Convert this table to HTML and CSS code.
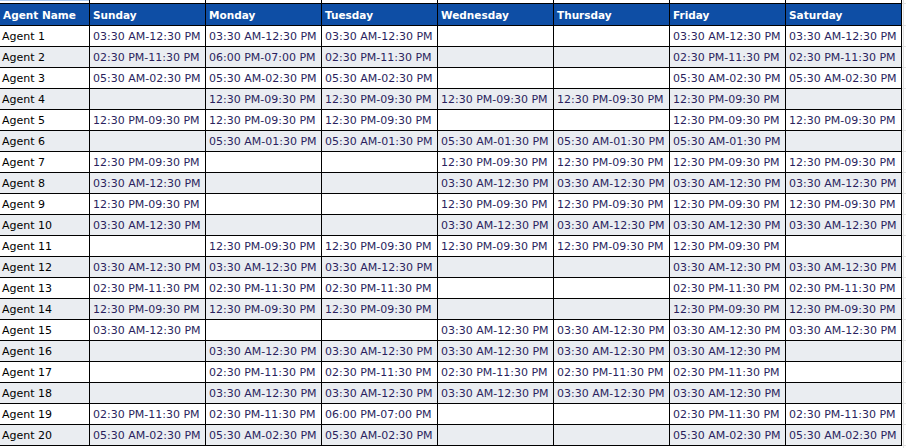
FILE: index.html
```html
<!DOCTYPE html>
<html>
<head>
<meta charset="utf-8">
<link rel="stylesheet" href="styles.css">
</head>
<body>
<div class="sheet">
  <div class="grid">
    <div class="strip first"></div><div class="strip"></div><div class="strip"></div><div class="strip"></div><div class="strip"></div><div class="strip"></div><div class="strip"></div><div class="strip"></div>
    <div class="hd">Agent Name</div><div class="hd">Sunday</div><div class="hd">Monday</div><div class="hd">Tuesday</div><div class="hd">Wednesday</div><div class="hd">Thursday</div><div class="hd">Friday</div><div class="hd">Saturday</div>

    <div class="name">Agent 1</div><div class="cell">03:30 AM-12:30 PM</div><div class="cell">03:30 AM-12:30 PM</div><div class="cell">03:30 AM-12:30 PM</div><div class="cell"></div><div class="cell"></div><div class="cell">03:30 AM-12:30 PM</div><div class="cell">03:30 AM-12:30 PM</div>
    <div class="name alt">Agent 2</div><div class="cell alt">02:30 PM-11:30 PM</div><div class="cell alt">06:00 PM-07:00 PM</div><div class="cell alt">02:30 PM-11:30 PM</div><div class="cell alt"></div><div class="cell alt"></div><div class="cell alt">02:30 PM-11:30 PM</div><div class="cell alt">02:30 PM-11:30 PM</div>
    <div class="name">Agent 3</div><div class="cell">05:30 AM-02:30 PM</div><div class="cell">05:30 AM-02:30 PM</div><div class="cell">05:30 AM-02:30 PM</div><div class="cell"></div><div class="cell"></div><div class="cell">05:30 AM-02:30 PM</div><div class="cell">05:30 AM-02:30 PM</div>
    <div class="name alt">Agent 4</div><div class="cell alt"></div><div class="cell alt">12:30 PM-09:30 PM</div><div class="cell alt">12:30 PM-09:30 PM</div><div class="cell alt">12:30 PM-09:30 PM</div><div class="cell alt">12:30 PM-09:30 PM</div><div class="cell alt">12:30 PM-09:30 PM</div><div class="cell alt"></div>
    <div class="name">Agent 5</div><div class="cell">12:30 PM-09:30 PM</div><div class="cell">12:30 PM-09:30 PM</div><div class="cell">12:30 PM-09:30 PM</div><div class="cell"></div><div class="cell"></div><div class="cell">12:30 PM-09:30 PM</div><div class="cell">12:30 PM-09:30 PM</div>
    <div class="name alt">Agent 6</div><div class="cell alt"></div><div class="cell alt">05:30 AM-01:30 PM</div><div class="cell alt">05:30 AM-01:30 PM</div><div class="cell alt">05:30 AM-01:30 PM</div><div class="cell alt">05:30 AM-01:30 PM</div><div class="cell alt">05:30 AM-01:30 PM</div><div class="cell alt"></div>
    <div class="name">Agent 7</div><div class="cell">12:30 PM-09:30 PM</div><div class="cell"></div><div class="cell"></div><div class="cell">12:30 PM-09:30 PM</div><div class="cell">12:30 PM-09:30 PM</div><div class="cell">12:30 PM-09:30 PM</div><div class="cell">12:30 PM-09:30 PM</div>
    <div class="name alt">Agent 8</div><div class="cell alt">03:30 AM-12:30 PM</div><div class="cell alt"></div><div class="cell alt"></div><div class="cell alt">03:30 AM-12:30 PM</div><div class="cell alt">03:30 AM-12:30 PM</div><div class="cell alt">03:30 AM-12:30 PM</div><div class="cell alt">03:30 AM-12:30 PM</div>
    <div class="name">Agent 9</div><div class="cell">12:30 PM-09:30 PM</div><div class="cell"></div><div class="cell"></div><div class="cell">12:30 PM-09:30 PM</div><div class="cell">12:30 PM-09:30 PM</div><div class="cell">12:30 PM-09:30 PM</div><div class="cell">12:30 PM-09:30 PM</div>
    <div class="name alt">Agent 10</div><div class="cell alt">03:30 AM-12:30 PM</div><div class="cell alt"></div><div class="cell alt"></div><div class="cell alt">03:30 AM-12:30 PM</div><div class="cell alt">03:30 AM-12:30 PM</div><div class="cell alt">03:30 AM-12:30 PM</div><div class="cell alt">03:30 AM-12:30 PM</div>
    <div class="name">Agent 11</div><div class="cell"></div><div class="cell">12:30 PM-09:30 PM</div><div class="cell">12:30 PM-09:30 PM</div><div class="cell">12:30 PM-09:30 PM</div><div class="cell">12:30 PM-09:30 PM</div><div class="cell">12:30 PM-09:30 PM</div><div class="cell"></div>
    <div class="name alt">Agent 12</div><div class="cell alt">03:30 AM-12:30 PM</div><div class="cell alt">03:30 AM-12:30 PM</div><div class="cell alt">03:30 AM-12:30 PM</div><div class="cell alt"></div><div class="cell alt"></div><div class="cell alt">03:30 AM-12:30 PM</div><div class="cell alt">03:30 AM-12:30 PM</div>
    <div class="name">Agent 13</div><div class="cell">02:30 PM-11:30 PM</div><div class="cell">02:30 PM-11:30 PM</div><div class="cell">02:30 PM-11:30 PM</div><div class="cell"></div><div class="cell"></div><div class="cell">02:30 PM-11:30 PM</div><div class="cell">02:30 PM-11:30 PM</div>
    <div class="name alt">Agent 14</div><div class="cell alt">12:30 PM-09:30 PM</div><div class="cell alt">12:30 PM-09:30 PM</div><div class="cell alt">12:30 PM-09:30 PM</div><div class="cell alt"></div><div class="cell alt"></div><div class="cell alt">12:30 PM-09:30 PM</div><div class="cell alt">12:30 PM-09:30 PM</div>
    <div class="name">Agent 15</div><div class="cell">03:30 AM-12:30 PM</div><div class="cell"></div><div class="cell"></div><div class="cell">03:30 AM-12:30 PM</div><div class="cell">03:30 AM-12:30 PM</div><div class="cell">03:30 AM-12:30 PM</div><div class="cell">03:30 AM-12:30 PM</div>
    <div class="name alt">Agent 16</div><div class="cell alt"></div><div class="cell alt">03:30 AM-12:30 PM</div><div class="cell alt">03:30 AM-12:30 PM</div><div class="cell alt">03:30 AM-12:30 PM</div><div class="cell alt">03:30 AM-12:30 PM</div><div class="cell alt">03:30 AM-12:30 PM</div><div class="cell alt"></div>
    <div class="name">Agent 17</div><div class="cell"></div><div class="cell">02:30 PM-11:30 PM</div><div class="cell">02:30 PM-11:30 PM</div><div class="cell">02:30 PM-11:30 PM</div><div class="cell">02:30 PM-11:30 PM</div><div class="cell">02:30 PM-11:30 PM</div><div class="cell"></div>
    <div class="name alt">Agent 18</div><div class="cell alt"></div><div class="cell alt">03:30 AM-12:30 PM</div><div class="cell alt">03:30 AM-12:30 PM</div><div class="cell alt">03:30 AM-12:30 PM</div><div class="cell alt">03:30 AM-12:30 PM</div><div class="cell alt">03:30 AM-12:30 PM</div><div class="cell alt"></div>
    <div class="name">Agent 19</div><div class="cell">02:30 PM-11:30 PM</div><div class="cell">02:30 PM-11:30 PM</div><div class="cell">06:00 PM-07:00 PM</div><div class="cell"></div><div class="cell"></div><div class="cell">02:30 PM-11:30 PM</div><div class="cell">02:30 PM-11:30 PM</div>
    <div class="name alt">Agent 20</div><div class="cell alt">05:30 AM-02:30 PM</div><div class="cell alt">05:30 AM-02:30 PM</div><div class="cell alt">05:30 AM-02:30 PM</div><div class="cell alt"></div><div class="cell alt"></div><div class="cell alt">05:30 AM-02:30 PM</div><div class="cell alt">05:30 AM-02:30 PM</div>
  </div>
  <div class="ghost">
    <div class="gc"></div><div class="gc"></div><div class="gc"></div><div class="gc"></div><div class="gc"></div><div class="gc"></div><div class="gc"></div><div class="gc"></div><div class="gc"></div><div class="gc"></div>
    <div class="gc"></div><div class="gc"></div><div class="gc"></div><div class="gc"></div><div class="gc"></div><div class="gc"></div><div class="gc"></div><div class="gc"></div><div class="gc"></div><div class="gc"></div>
    <div class="gc"></div><div class="gc"></div><div class="gc"></div><div class="gc"></div><div class="gc"></div><div class="gc"></div><div class="gc"></div><div class="gc"></div><div class="gc"></div><div class="gc"></div>
    <div class="gc"></div><div class="gc"></div><div class="gc"></div><div class="gc"></div><div class="gc"></div><div class="gc"></div><div class="gc"></div><div class="gc"></div><div class="gc"></div><div class="gc"></div>
    <div class="gc"></div><div class="gc"></div><div class="gc"></div><div class="gc"></div><div class="gc"></div><div class="gc"></div>
  </div>
</div>
</body>
</html>
```
FILE: styles.css
```css
html, body {
  margin: 0;
  padding: 0;
  background: #ffffff;
}
body {
  font-family: "DejaVu Sans", Verdana, sans-serif;
  font-size: 11px;
}
.sheet {
  display: flex;
  align-items: flex-start;
}
.grid {
  display: grid;
  grid-template-columns: 89px repeat(7, 115px);
  grid-template-rows: 3px 21px repeat(20, 20px);
  gap: 1px;
  background: #000000;
  border-right: 1px solid #000000;
  border-bottom: 1px solid #000000;
}
.grid > div {
  background: #ffffff;
  white-space: nowrap;
  overflow: hidden;
  display: flex;
  align-items: center;
  padding-left: 3px;
}
.grid > .strip {
  padding: 0;
}
.grid > .strip.first {
  box-shadow: inset 0 1px 0 #a9c8ee;
}
.grid > .hd {
  background: #0e4ea5;
  color: #ffffff;
  font-weight: bold;
  font-size: 10.5px;
  padding-top: 1px;
}
.grid > .hd:first-of-type,
.grid > .name {
  padding-left: 2px;
}
.grid > .name {
  color: #000000;
}
.grid > .cell {
  color: #2a1f5e;
}
.grid > .alt {
  background: #eaedf1;
}
.ghost {
  display: grid;
  grid-template-columns: 1px 2px;
  grid-template-rows: 3px 21px repeat(21, 20px);
  gap: 1px;
  background: #e2e2e2;
}
.gc {
  background: #ffffff;
}
```
